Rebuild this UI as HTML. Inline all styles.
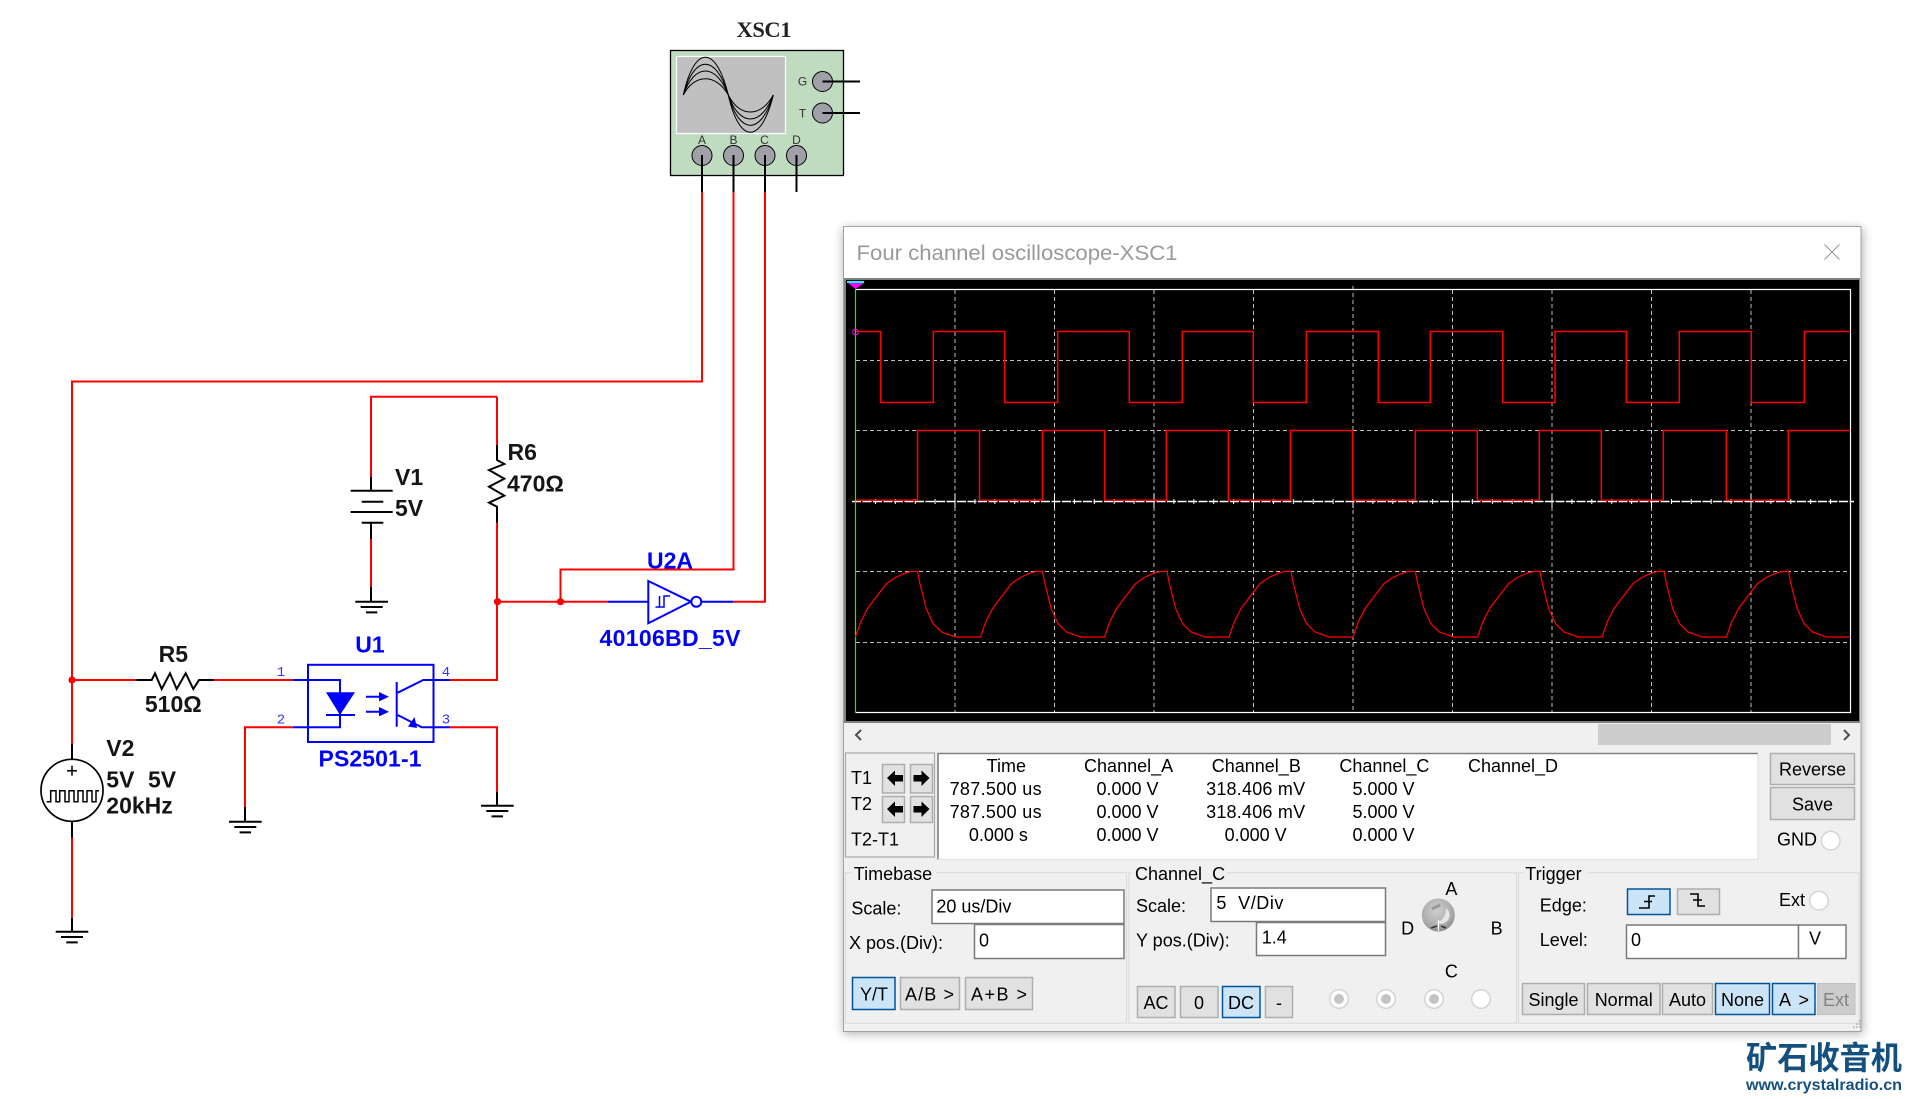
<!DOCTYPE html>
<html lang="zh"><head><meta charset="utf-8"><title>Four channel oscilloscope-XSC1</title>
<style>
html,body{margin:0;padding:0;background:#fff;width:1911px;height:1099px;overflow:hidden}
svg{display:block}
text{font-family:"Liberation Sans","Noto Sans CJK SC",sans-serif}
.u{font-size:18px;fill:#000}
.m{text-anchor:middle}
.sc{font-size:23px;font-weight:bold;fill:#151515}
.bl{font-size:23px;font-weight:bold;fill:#0000ff}
.pin{font-family:"Liberation Mono",monospace;font-size:14px;fill:#3333ff;text-anchor:middle}
.w{fill:none;stroke-width:2}
.r{stroke:#f00}.k{stroke:#000}.n{stroke:#00f}
.b{fill:#e1e1e1;stroke:#adadad;stroke-width:1.5}
.s{fill:#cce4f7;stroke:#005499;stroke-width:1.5}
.i{fill:#fff;stroke:#7a7a7a;stroke-width:1.5}
.g{fill:none;stroke:#dcdcdc;stroke-width:1.2}
.rad{fill:#fff;stroke:#d4d4d4;stroke-width:1.5}
.pc{fill:#a0a0a8;stroke:#000;stroke-width:1}
</style></head><body>
<svg xmlns="http://www.w3.org/2000/svg" width="1911" height="1099" viewBox="0 0 1911 1099">
<defs>
<filter id="sh" x="-3%" y="-3%" width="106%" height="106%"><feGaussianBlur stdDeviation="5"/></filter>
<radialGradient id="kn" cx="45%" cy="35%" r="70%"><stop offset="0" stop-color="#cfcfcf"/><stop offset=".7" stop-color="#aaa"/><stop offset="1" stop-color="#858585"/></radialGradient>
</defs>
<rect width="1911" height="1099" fill="#fff"/>

<!-- XSC1 instrument -->
<text x="764" y="37" text-anchor="middle" style="font-family:'Liberation Serif',serif;font-size:22.5px;font-weight:bold" fill="#222" textLength="55">XSC1</text>
<rect x="670.5" y="50.5" width="173" height="125" fill="#c0dcc0" stroke="#000" stroke-width="1.3"/>
<rect x="676.5" y="56.5" width="109" height="77" fill="#c0c0c0" stroke="#fff" stroke-width="1.2"/>
<g fill="none" stroke="#000" stroke-width="1">
<path d="M683.3 95C694.5 44.7 716 44.7 728.3 95C739.5 144.7 761 144.7 773.3 95"/>
<path d="M683.3 95C694.5 54 716 54 728.3 95C739.5 135.4 761 135.4 773.3 95"/>
<path d="M683.3 95C694.5 63 716 63 728.3 95C739.5 127 761 127 773.3 95"/>
<path d="M683.3 95C694.5 73.3 716 73.3 728.3 95C739.5 117.7 761 117.7 773.3 95"/>
</g>
<g font-size="12" fill="#333" text-anchor="middle">
<text x="802.5" y="85.5">G</text><text x="802.5" y="117.5">T</text>
<text x="702" y="144">A</text><text x="733.5" y="144">B</text><text x="764.5" y="144">C</text><text x="796.5" y="144">D</text>
</g>
<circle class="pc" cx="822.5" cy="81.5" r="10"/><circle class="pc" cx="822.5" cy="113" r="10"/>
<circle class="pc" cx="702" cy="155.5" r="10"/><circle class="pc" cx="733.5" cy="155.5" r="10"/><circle class="pc" cx="765" cy="155.5" r="10"/><circle class="pc" cx="796.5" cy="155.5" r="10"/>
<path class="w k" d="M822.5 81.5H860M822.5 113H860M702 155V192M733.5 155V192M765 155V192M796.5 155V192"/>

<!-- wires -->
<path class="w r" d="M702 192V381.5H72V744M733.5 192V569.5H560.5V601.7M765 192V601.7H733M497 396.7H371V476.7M497 396.7V445M371 539V586.7M497 522.7V680H450M497 601.7H607.7M72 680H135.7M214 680H292.7M292.7 727.3H245V806.7M450 727.3H497V791.7M72 837.7V917.7"/>
<circle cx="72" cy="680" r="3.6" fill="#f00"/><circle cx="497.5" cy="601.7" r="3.6" fill="#f00"/><circle cx="560.5" cy="601.7" r="3.6" fill="#f00"/>

<!-- V1 + R6 -->
<path class="w k" d="M371 476.7V490.7M350.7 490.7H392.7M361.7 501.7H383.3M350.7 512H392.7M361.7 522.7H383.3M371 522.7V539M371 586.7V601.7M355.3 601.7H388M360.7 607H382.7M366 612.4H377.3"/>
<path class="w k" d="M497 445V460L504.3 464 489 470 504.3 478.7 489 486.7 504.3 495.7 489 502.7 497 506.7V522.7"/>
<text class="sc" x="395" y="485">V1</text><text class="sc" x="395" y="516">5V</text>
<text class="sc" x="507.5" y="460">R6</text><text class="sc" x="507" y="491.5">470Ω</text>

<!-- R5, V2 -->
<path class="w k" d="M135.7 680H151.7L155 673.3 161.7 689 170 673.3 176.7 689 185.7 673.3 193.3 689 199 680H214"/>
<text class="sc m" x="173.3" y="662">R5</text><text class="sc m" x="173.3" y="712">510Ω</text>
<path class="w k" d="M72 744V759.3M72 821.3V837.7M72 917.7V931.7M55.7 931.7H88.3M61 937H83M66.3 942.4H77.7M245 806.7V821.7M229 821.7H261.7M234.3 827H256.3M239.6 832.4H251M497 791.7V805.7M481 805.7H513.7M486.3 811H508.3M491.6 816.4H503"/>
<circle cx="72" cy="790.3" r="31" fill="#fff" stroke="#000" stroke-width="1.7"/>
<path d="M67 770.7H77M72 765.7V775.7" stroke="#000" stroke-width="1.5" fill="none"/>
<path d="M46.7 801.7H50.7V790.7H56V801.7H59.7V790.7H65V801.7H69V790.7H74V801.7H78V790.7H83V801.7H87V790.7H92V801.7H96V790.7H99" fill="none" stroke="#000" stroke-width="1.5"/>
<text class="sc" x="106.3" y="756">V2</text><text class="sc" x="106.3" y="787.5">5V</text><text class="sc" x="148" y="787.5">5V</text><text class="sc" x="106.3" y="813.5">20kHz</text>

<!-- U1 -->
<text class="bl m" x="370" y="652.5">U1</text><text class="bl m" x="370" y="766.5" textLength="103">PS2501-1</text>
<rect x="308" y="664.8" width="125.5" height="77.2" fill="none" stroke="#00f" stroke-width="2"/>
<path class="w n" d="M292.7 680H340V727.3H292.7M326 715H355M366 696.7H380M366 711.7H380M396.7 682V726.7M397.7 692.7L423.3 680H450M397.7 715L421.7 727.3H450"/>
<path d="M326 692.3H355L340 715Z" fill="#00f"/>
<path d="M379 692L389 696.7 379 701.4ZM379 707L389 711.7 379 716.4Z" fill="#00f"/>
<path d="M408 726.5L417 728 414.5 717Z" fill="#00f"/>
<text class="pin" x="281" y="676">1</text><text class="pin" x="281" y="723.5">2</text><text class="pin" x="446" y="676">4</text><text class="pin" x="446" y="723.5">3</text>

<!-- U2A -->
<text class="bl m" x="670" y="568.5">U2A</text><text class="bl m" x="670" y="646" textLength="141">40106BD_5V</text>
<path class="w n" d="M607.7 601.7H648.3M701.5 601.7H733"/>
<path d="M648.3 581L691 601.7 648.3 623.3Z" fill="#fff" stroke="#00f" stroke-width="2"/>
<circle cx="696.3" cy="601.7" r="5" fill="#fff" stroke="#00f" stroke-width="2"/>
<path d="M655.5 607H664V596H669.5M659.5 596V607M664 596H670" fill="none" stroke="#00f" stroke-width="1.5"/>

<!-- Window -->
<rect x="843" y="228" width="1020" height="806" fill="#000" opacity=".3" filter="url(#sh)"/>
<rect x="843.5" y="226.5" width="1017.5" height="805" fill="#f0f0f0" stroke="#a3a3a3"/>
<rect x="844" y="227" width="1016.5" height="51" fill="#fff"/>
<text x="856.5" y="260" font-size="21.5" fill="#999" textLength="321" lengthAdjust="spacingAndGlyphs">Four channel oscilloscope-XSC1</text>
<path d="M1824.5 244.5L1839.5 259.5M1839.5 244.5L1824.5 259.5" stroke="#999" stroke-width="1.1" fill="none"/>

<!-- Scope -->
<rect x="844" y="278" width="1016" height="445" fill="#808080"/>
<rect x="846" y="280" width="1013" height="441" fill="#000"/>
<g fill="none" stroke="#c0c0c0" stroke-width="1" stroke-dasharray="4 3">
<path d="M955 290V712M1054.5 290V712M1154 290V712M1253.5 290V712M1353 286V712M1452.5 290V712M1552 290V712M1651.5 290V712M1751 290V712"/>
<path d="M856 360.5H1850M856 430.5H1850M856 571.5H1850M856 642.5H1850"/>
</g>
<path d="M852 501.5H1854" stroke="#fff" stroke-width="1.5" stroke-dasharray="9 1.5" fill="none"/>
<path d="M875.4 499v5M895.3 499v5M915.2 499v5M935.1 499v5M955 494v14M974.9 499v5M994.8 499v5M1014.7 499v5M1034.6 499v5M1054.5 494v14M1074.4 499v5M1094.3 499v5M1114.2 499v5M1134.1 499v5M1154 494v14M1173.9 499v5M1193.8 499v5M1213.7 499v5M1233.6 499v5M1253.5 494v14M1273.4 499v5M1293.3 499v5M1313.2 499v5M1333.1 499v5M1353 494v14M1372.9 499v5M1392.8 499v5M1412.7 499v5M1432.6 499v5M1452.5 494v14M1472.4 499v5M1492.3 499v5M1512.2 499v5M1532.1 499v5M1552 494v14M1571.9 499v5M1591.8 499v5M1611.7 499v5M1631.6 499v5M1651.5 494v14M1671.4 499v5M1691.3 499v5M1711.2 499v5M1731.1 499v5M1751 494v14M1770.9 499v5M1790.8 499v5M1810.7 499v5M1830.6 499v5" stroke="#fff" fill="none"/>
<path d="M855.5 289.5H1850.5V712.5H855.5" fill="none" stroke="#fff" stroke-width="1.2"/>
<path d="M855.5 289V712.5" stroke="#00ff00" stroke-width="1.2" fill="none"/>
<rect x="847" y="281" width="17" height="2" fill="#00ffff"/>
<path d="M848 283H864L855.5 289Z" fill="#ff00ff"/>
<circle cx="855.5" cy="332" r="2.8" fill="none" stroke="#ff00ff"/>
<!-- channel A -->
<path fill="none" stroke="#f00" stroke-width="1.5" d="M856 331.5H880.6V402.5H933.3V331.5H1004.6V402.5H1057.6V331.5H1129.3V402.5H1182.3V331.5H1253.2V402.5H1306.3V331.5H1378.3V402.5H1430.3V331.5H1502.7V402.5H1555V331.5H1626.3V402.5H1679.3V331.5H1751.3V402.5H1804.3V331.5H1850"/>
<!-- channel B -->
<path fill="none" stroke="#f00" stroke-width="1.5" d="M856 500.2H917.5V430.5H979.5V500.2H1042.5V430.5H1104.5V500.2H1166.4V430.5H1228.4V500.2H1290.4V430.5H1352.7V500.2H1415.3V430.5H1477.3V500.2H1539.3V430.5H1601.3V500.2H1663.3V430.5H1726.3V500.2H1788.3V430.5H1850"/>
<!-- channel C -->
<path fill="none" stroke="#f00" stroke-width="1.2" d="M855.5 637l5.2-15 6.8-13.4 8.7-11.6 10.3-13.4 8.6-6 10.3-4.6 5.1-1.4 7-.3H917.5l2.4 12.3 6.3 25 6.8 15 8.5 8.4 14 5H980.5l5.2-15 6.8-13.4 8.7-11.6 10.3-13.4 8.6-6 10.3-4.6 5.1-1.4 7-.3H1042.5l2.4 12.3 6.3 25 6.8 15 8.5 8.4 14 5H1104.5l5.2-15 6.8-13.4 8.7-11.6 10.3-13.4 8.6-6 10.3-4.6 5.1-1.4 7-.3H1167l2.4 12.3 6.3 25 6.8 15 8.5 8.4 14 5H1229l5.2-15 6.8-13.4 8.7-11.6 10.3-13.4 8.6-6 10.3-4.6 5.1-1.4 7-.3H1291l2.4 12.3 6.3 25 6.8 15 8.5 8.4 14 5H1353l5.2-15 6.8-13.4 8.7-11.6 10.3-13.4 8.6-6 10.3-4.6 5.1-1.4 7-.3H1415.3l2.4 12.3 6.3 25 6.8 15 8.5 8.4 14 5H1477.6l5.2-15 6.8-13.4 8.7-11.6 10.3-13.4 8.6-6 10.3-4.6 5.1-1.4 7-.3H1540l2.4 12.3 6.3 25 6.8 15 8.5 8.4 14 5H1602l5.2-15 6.8-13.4 8.7-11.6 10.3-13.4 8.6-6 10.3-4.6 5.1-1.4 7-.3H1664l2.4 12.3 6.3 25 6.8 15 8.5 8.4 14 5H1726.5l5.2-15 6.8-13.4 8.7-11.6 10.3-13.4 8.6-6 10.3-4.6 5.1-1.4 7-.3H1788.5l2.4 12.3 6.3 25 6.8 15 8.5 8.4 14 5H1850"/>

<!-- scrollbar -->
<rect x="1598" y="724" width="233" height="21" fill="#cdcdcd"/>
<path d="M861 730L856 735 861 740M1844 730L1849 735 1844 740" fill="none" stroke="#505050" stroke-width="2"/>

<!-- cursor panel -->
<rect x="845.5" y="753" width="89" height="104" fill="#f0f0f0" stroke="#a8a8a8" stroke-width="1.2"/>
<text class="u" x="851" y="784">T1</text><text class="u" x="851" y="810">T2</text><text class="u" x="851" y="845.5">T2-T1</text>
<rect class="b" x="882.5" y="764.5" width="22" height="28.5"/><rect class="b" x="910.5" y="764.5" width="22" height="28.5"/>
<rect class="b" x="882.5" y="796.5" width="22" height="26"/><rect class="b" x="910.5" y="796.5" width="22" height="26"/>
<path d="M887 778L895 770.5V775H903V781.5H895V786Z M887 809L895 801.5V806H903V812.5H895V817Z" fill="#000"/>
<path d="M929.5 778L921.5 770.5V775H913.5V781.5H921.5V786Z M929.5 809L921.5 801.5V806H913.5V812.5H921.5V817Z" fill="#000"/>

<rect x="938" y="753.5" width="820" height="105.5" fill="#fff"/>
<path d="M938 859.5V753.5H1758" fill="none" stroke="#808080" stroke-width="1.6"/>
<path d="M938 859.5H1758V753.5" fill="none" stroke="#e3e3e3" stroke-width="1.2"/>
<text class="u m" x="1006.3" y="772">Time</text><text class="u m" x="1128.6" y="772">Channel_A</text><text class="u m" x="1256.3" y="772">Channel_B</text><text class="u m" x="1384.4" y="772">Channel_C</text><text class="u m" x="1513" y="772">Channel_D</text>
<text class="u m" x="995.6" y="795" textLength="92">787.500 us</text><text class="u m" x="1127.5" y="795">0.000 V</text><text class="u m" x="1255.6" y="795" textLength="99">318.406 mV</text><text class="u m" x="1383.5" y="795">5.000 V</text>
<text class="u m" x="995.6" y="818" textLength="92">787.500 us</text><text class="u m" x="1127.5" y="818">0.000 V</text><text class="u m" x="1255.6" y="818" textLength="99">318.406 mV</text><text class="u m" x="1383.5" y="818">5.000 V</text>
<text class="u m" x="998.4" y="841">0.000 s</text><text class="u m" x="1127.5" y="841">0.000 V</text><text class="u m" x="1255.6" y="841">0.000 V</text><text class="u m" x="1383.5" y="841">0.000 V</text>
<rect class="b" x="1770.5" y="753.5" width="84" height="31"/><text class="u m" x="1812.5" y="775.5">Reverse</text>
<rect class="b" x="1770.5" y="787.5" width="84" height="32"/><text class="u m" x="1812.5" y="810.5">Save</text>
<text class="u" x="1777" y="845.5">GND</text><circle class="rad" cx="1830.7" cy="840.7" r="9.3"/>

<!-- Timebase -->
<rect class="g" x="845.5" y="872.7" width="281" height="150.5"/>
<rect x="851" y="865" width="85" height="16" fill="#f0f0f0"/>
<text class="u" x="853.8" y="880">Timebase</text>
<text class="u" x="851.4" y="914.5">Scale:</text>
<rect class="i" x="932" y="890" width="192" height="33.5"/><text class="u" x="936.4" y="912.5">20 us/Div</text>
<text class="u" x="849" y="949">X pos.(Div):</text>
<rect class="i" x="974.5" y="924.5" width="149.5" height="34"/><text class="u" x="979" y="946.7">0</text>
<rect class="s" x="852.5" y="977.5" width="42.5" height="32"/><text class="u m" x="874" y="1000.5">Y/T</text>
<rect class="b" x="900.5" y="977.5" width="59" height="32"/><text class="u m" x="929.5" y="1000.5" textLength="49">A/B &gt;</text>
<rect class="b" x="965.5" y="977.5" width="67" height="32"/><text class="u m" x="999" y="1000.5" textLength="56">A+B &gt;</text>

<!-- Channel C -->
<rect class="g" x="1129" y="872.7" width="387.5" height="150.5"/>
<rect x="1132" y="865" width="95" height="16" fill="#f0f0f0"/>
<text class="u" x="1135" y="880">Channel_C</text>
<text class="u" x="1136" y="912">Scale:</text>
<rect class="i" x="1211" y="888" width="174.5" height="33.5"/><text class="u" x="1216.4" y="909" xml:space="preserve" textLength="67">5  V/Div</text>
<text class="u" x="1136" y="946.7">Y pos.(Div):</text>
<rect class="i" x="1256.5" y="922.5" width="129" height="33"/><text class="u" x="1261.8" y="943.5">1.4</text>
<rect class="b" x="1137.5" y="986.5" width="37.5" height="31"/><text class="u m" x="1156" y="1009">AC</text>
<rect class="b" x="1180.5" y="986.5" width="37.5" height="31"/><text class="u m" x="1199" y="1009">0</text>
<rect class="s" x="1222.5" y="986.5" width="37.5" height="31"/><text class="u m" x="1241" y="1009">DC</text>
<rect class="b" x="1265.5" y="986.5" width="27" height="31"/><text class="u m" x="1279" y="1009">-</text>
<circle class="rad" cx="1339" cy="999" r="9.3"/><circle cx="1339" cy="999" r="5" fill="#c4c4c4"/>
<circle class="rad" cx="1386" cy="999" r="9.3"/><circle cx="1386" cy="999" r="5" fill="#c4c4c4"/>
<circle class="rad" cx="1434" cy="999" r="9.3"/><circle cx="1434" cy="999" r="5" fill="#c4c4c4"/>
<circle class="rad" cx="1481" cy="999" r="9.3"/>
<text class="u m" x="1451.4" y="895">A</text><text class="u m" x="1407.6" y="934.5">D</text><text class="u m" x="1496.6" y="934.5">B</text><text class="u m" x="1451.4" y="977.5">C</text>
<circle cx="1438.3" cy="915" r="16.5" fill="url(#kn)"/>
<path d="M1446 908A8.5 8.5 0 0 1 1436 922C1442 922 1446 916 1446 908Z" fill="#e6e6e6"/>
<path d="M1432 909L1440 905" fill="none" stroke="#999" stroke-width="3"/>
<path d="M1438.5 920V931" stroke="#fff" stroke-width="1"/>
<path d="M1431 928L1437 926M1441 926L1446 928" stroke="#333" stroke-width="1.5"/>

<!-- Trigger -->
<rect class="g" x="1518.5" y="872.7" width="340.5" height="150.5"/>
<rect x="1523" y="865" width="65" height="16" fill="#f0f0f0"/>
<text class="u" x="1525.3" y="880">Trigger</text>
<text class="u" x="1539.8" y="911.7">Edge:</text><text class="u" x="1539.8" y="946">Level:</text>
<rect class="s" x="1627.5" y="889" width="42.5" height="25.5"/><path d="M1639 908H1649V896H1655M1644 901.5H1652" fill="none" stroke="#000" stroke-width="1.6"/>
<rect class="b" x="1677.5" y="889" width="42" height="25.5"/><path d="M1690 894H1698V906H1705M1693 900H1702" fill="none" stroke="#000" stroke-width="1.6"/>
<text class="u" x="1779" y="906">Ext</text><circle class="rad" cx="1819" cy="900.7" r="9.3"/>
<rect class="i" x="1626.5" y="925" width="172" height="33.5"/><text class="u" x="1631" y="946">0</text>
<rect class="i" x="1798.5" y="925" width="47.5" height="33.5"/><text class="u" x="1809" y="944.5">V</text>
<rect class="b" x="1522.5" y="983.5" width="62" height="31"/><text class="u m" x="1553.5" y="1006">Single</text>
<rect class="b" x="1587.5" y="983.5" width="72.5" height="31"/><text class="u m" x="1623.7" y="1006">Normal</text>
<rect class="b" x="1662.5" y="983.5" width="50" height="31"/><text class="u m" x="1687.5" y="1006">Auto</text>
<rect class="s" x="1715.5" y="983.5" width="54" height="31"/><text class="u m" x="1742.5" y="1006">None</text>
<rect class="s" x="1772.5" y="983.5" width="42.5" height="31"/><text class="u m" x="1794" y="1006" textLength="30">A &gt;</text>
<rect x="1817.5" y="983.5" width="37.5" height="31" fill="#ccc" stroke="#bfbfbf"/><text class="u m" x="1836" y="1006" style="fill:#838383">Ext</text>
<path d="M1859 1021h1.5M1856 1024h1.5M1859 1024h1.5M1853 1027h1.5M1856 1027h1.5M1859 1027h1.5" stroke="#aaa" stroke-width="1.5"/>

<!-- watermark logo -->
<text x="1746" y="1069" font-size="32" font-weight="bold" fill="#14507f" textLength="156" lengthAdjust="spacingAndGlyphs">矿石收音机</text>
<text x="1746" y="1090" font-size="16" font-weight="bold" fill="#14507f" textLength="156" lengthAdjust="spacingAndGlyphs">www.crystalradio.cn</text>
</svg>
</body></html>
